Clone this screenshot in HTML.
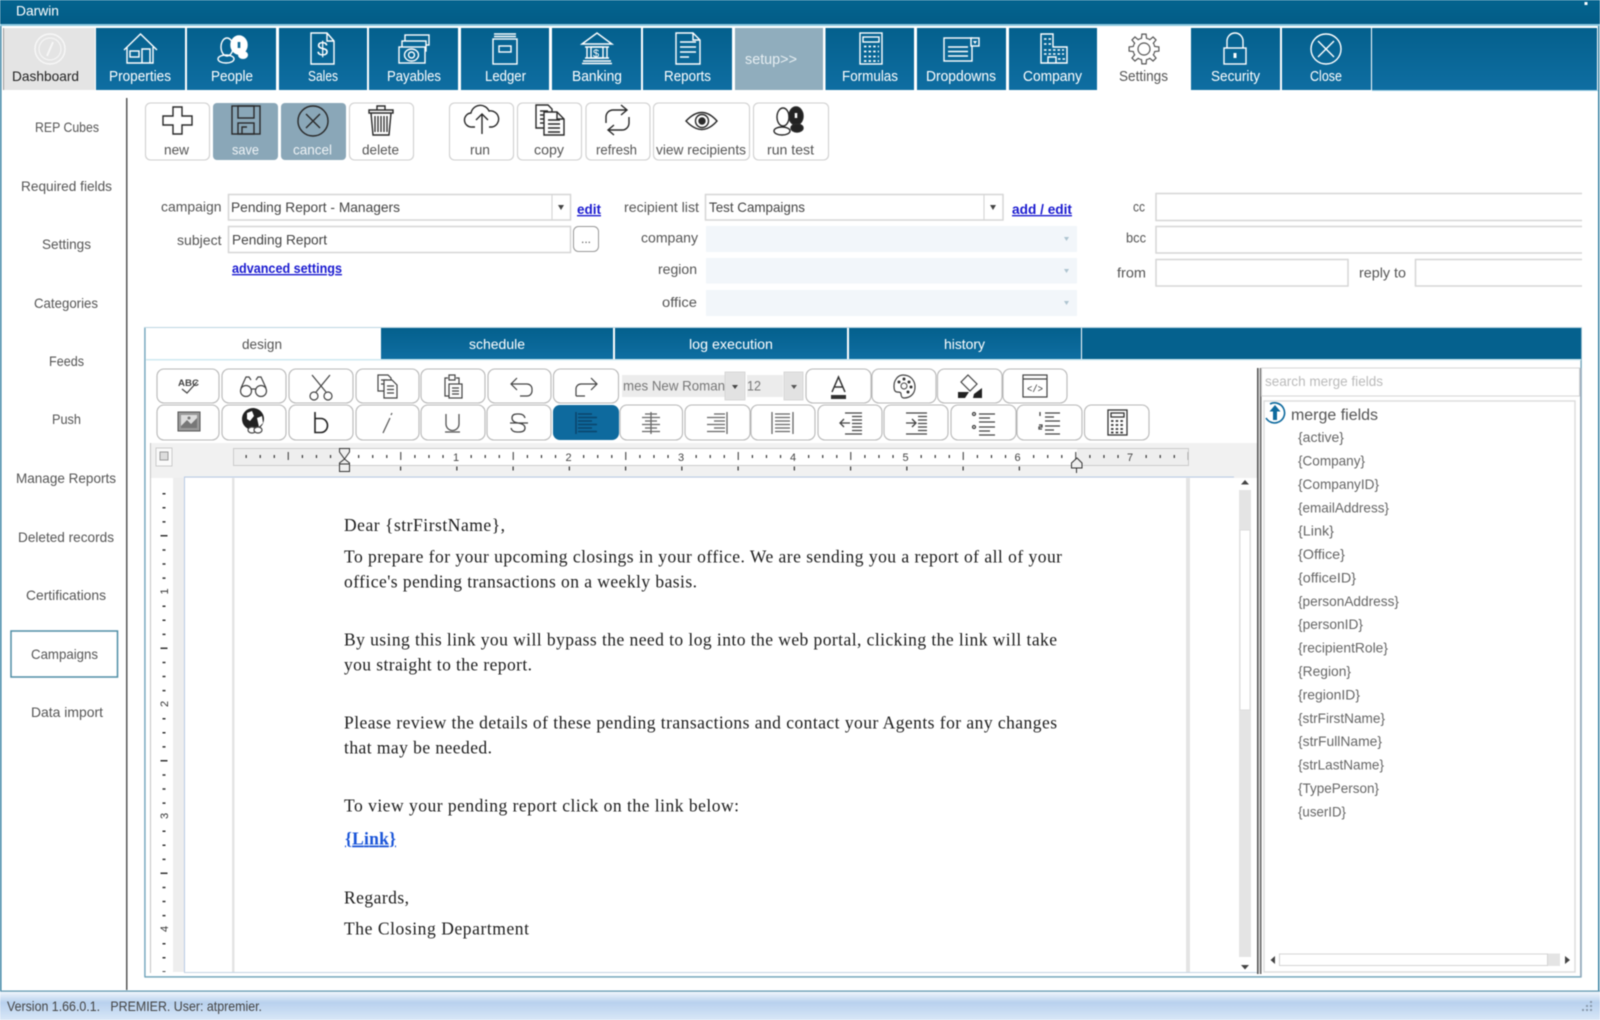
<!DOCTYPE html>
<html><head><meta charset="utf-8"><title>Darwin</title>
<style>
html,body{margin:0;padding:0;background:#fff;width:1600px;height:1020px;overflow:hidden}
svg{display:block;filter:blur(.5px)}
text{font-family:"Liberation Sans",sans-serif;font-size:14px;fill:#555;white-space:pre}
.nv{fill:#fff;font-size:14.5px}
.tb{fill:#555;font-size:14px}
.dk{fill:#444}
.lk{fill:#1a1ad0;font-weight:bold;font-size:13.5px;text-decoration:underline}
.bd{font-family:"Liberation Serif",serif;font-size:17.5px;fill:#1c1c1c}
.mf{fill:#666;font-size:14px}
.ni{fill:none;stroke:#fff;stroke-width:1.4}
.ti{fill:none;stroke:#2a2a2a;stroke-width:1.4}
.ei{fill:none;stroke:#444;stroke-width:1.2}
.btn{fill:#fff;stroke:#b8b8b8;stroke-width:1.1}
.tbb{fill:#fff;stroke:#cfcfcf;stroke-width:1.1}
.in{fill:#fff;stroke:#d6d6d6;stroke-width:1.5}
.dis{fill:#f2f6fa}
</style></head><body>
<svg xmlns="http://www.w3.org/2000/svg" width="1600" height="1020" viewBox="0 0 1600 1020">
<defs>
<linearGradient id="tab" x1="0" y1="0" x2="0" y2="1"><stop offset="0" stop-color="#04608d"/><stop offset="1" stop-color="#0f6ea2"/></linearGradient>
<linearGradient id="ttl" x1="0" y1="0" x2="0" y2="1"><stop offset="0" stop-color="#04648f"/><stop offset="1" stop-color="#035c87"/></linearGradient>
<linearGradient id="st" x1="0" y1="0" x2="0" y2="1"><stop offset="0" stop-color="#f4f8fd"/><stop offset=".4" stop-color="#b8d1ee"/><stop offset="1" stop-color="#d9e7f7"/></linearGradient>
<path id="t" d="M-4.2 -10.2L-2.5 -10.7L-2.1 -14.9H2.1L2.5 -10.7L4.2 -10.2"/>
</defs>
<rect width="1600" height="1020" fill="#fff"/>
<!-- title -->
<rect width="1600" height="24" fill="url(#ttl)"/>
<rect y="24" width="1600" height="2" fill="#8fcae0"/>
<text x="16" y="15.5" fill="#fff" style="fill:#fff" textLength="43" lengthAdjust="spacingAndGlyphs">Darwin</text>
<rect x="1584.5" y="2" width="3" height="3" fill="#fff"/>
<!-- frame -->
<rect x="0" y="26" width="1.5" height="965" fill="#3b84a4"/><rect x="1598" y="26" width="1.5" height="965" fill="#3b84a4"/>
<!-- nav tabs -->
<rect x="3" y="28" width="1.5" height="62" fill="#999"/>
<rect x="4" y="28" width="91" height="62" fill="#e4e4e4"/>
<g fill="url(#tab)">
<rect x="96" y="28" width="89" height="62"/><rect x="187" y="28" width="89" height="62"/><rect x="279" y="28" width="88" height="62"/><rect x="369" y="28" width="89" height="62"/><rect x="461" y="28" width="88" height="62"/><rect x="552" y="28" width="89" height="62"/><rect x="643" y="28" width="89" height="62"/>
<rect x="825.5" y="28" width="88.5" height="62"/><rect x="917" y="28" width="89" height="62"/><rect x="1009" y="28" width="88" height="62"/><rect x="1191" y="28" width="89" height="62"/><rect x="1282" y="28" width="89" height="62"/><rect x="1372" y="28" width="225" height="62"/>
</g>
<rect x="735" y="28" width="88" height="62" fill="#90adbd"/>
<rect x="1372" y="90" width="226" height="1" fill="#9fd0e4"/>
<text x="12" y="81" style="fill:#222" font-size="14.5" textLength="67" lengthAdjust="spacingAndGlyphs">Dashboard</text>
<text class="nv" x="109" y="81" textLength="62" lengthAdjust="spacingAndGlyphs">Properties</text>
<text class="nv" x="211" y="81" textLength="42" lengthAdjust="spacingAndGlyphs">People</text>
<text class="nv" x="308" y="81" textLength="30" lengthAdjust="spacingAndGlyphs">Sales</text>
<text class="nv" x="387" y="81" textLength="54" lengthAdjust="spacingAndGlyphs">Payables</text>
<text class="nv" x="485" y="81" textLength="41" lengthAdjust="spacingAndGlyphs">Ledger</text>
<text class="nv" x="572" y="81" textLength="50" lengthAdjust="spacingAndGlyphs">Banking</text>
<text class="nv" x="664" y="81" textLength="47" lengthAdjust="spacingAndGlyphs">Reports</text>
<text class="nv" x="745" y="64" textLength="52" lengthAdjust="spacingAndGlyphs" style="fill:#e6eef2">setup&gt;&gt;</text>
<text class="nv" x="842" y="81" textLength="56" lengthAdjust="spacingAndGlyphs">Formulas</text>
<text class="nv" x="926" y="81" textLength="70" lengthAdjust="spacingAndGlyphs">Dropdowns</text>
<text class="nv" x="1023" y="81" textLength="59" lengthAdjust="spacingAndGlyphs">Company</text>
<text class="nv" x="1119" y="81" textLength="49" lengthAdjust="spacingAndGlyphs" style="fill:#555">Settings</text>
<text class="nv" x="1211" y="81" textLength="49" lengthAdjust="spacingAndGlyphs">Security</text>
<text class="nv" x="1310" y="81" textLength="32" lengthAdjust="spacingAndGlyphs">Close</text>
<!-- nav icons -->
<g fill="none" stroke="#f8f8f8" stroke-width="1.4"><circle cx="50" cy="49" r="15"/><circle cx="50" cy="49" r="11" stroke-width="1"/><path d="M47 56L53 42" stroke-width="1.800"/></g>
<g class="ni"><path d="M124 50L140.500 34L157 50M127 47V63H153V47"/><rect x="130" y="51" width="9" height="6"/><path d="M142 63V49H150V63"/></g>
<g class="ni"><ellipse cx="227" cy="47" rx="6" ry="9"/><ellipse cx="226" cy="59" rx="8" ry="4"/><ellipse cx="239" cy="45" rx="8" ry="9" fill="#fff"/><path d="M239 42v6" stroke="#0a6797" stroke-width="2.600"/><ellipse cx="243" cy="55" rx="5" ry="4" fill="#fff" stroke="none"/></g>
<g class="ni"><path d="M311 33H327L334 41V64H311ZM327 33V41H334"/></g>
<text x="317" y="56" style="fill:#fff;font-size:20px">$</text>
<g class="ni"><rect x="405" y="35" width="24" height="10"/><rect x="402" y="41" width="24" height="10" fill="#0a6797"/><rect x="399" y="47" width="26" height="16" fill="#0a6797"/><ellipse cx="411.500" cy="55" rx="7" ry="6"/><ellipse cx="411.500" cy="55" rx="3" ry="3"/></g>
<g class="ni"><rect x="493" y="39" width="24" height="25"/><path d="M494 34H516M494 36.500H516" /><rect x="499" y="46" width="12" height="6"/></g>
<g class="ni"><path d="M582 44L597 33L612 44Z"/><path d="M585 47H609M585 58H609M583 61H611M582 63.500H612M587 47V58M607 47V58"/><rect x="591" y="47" width="12" height="11"/></g>
<text x="593" y="57" style="fill:#fff;font-size:11px">$</text>
<g class="ni"><path d="M676 33H693L700 40V64H676ZM693 33V40H700M680 42H696M680 47H696M680 52H696M680 57H689"/></g>
<g class="ni"><rect x="860" y="33" width="22" height="31"/><rect x="863" y="37" width="16" height="5"/></g>
<g fill="none" stroke="#fff" stroke-width="1.800" stroke-dasharray="2.400 2.200"><path d="M864 46.500H879M864 51.500H879M864 56.500H879M864 61H879"/></g>
<g class="ni"><rect x="944" y="38" width="28" height="23"/><rect x="971" y="38" width="8" height="8" fill="#0a6797"/><path d="M973 41H977L975 44Z" fill="#fff" stroke="none"/><path d="M948 47H968M948 51.500H968M948 56H968"/></g>
<g class="ni"><path d="M1041 34H1053V47H1067V63H1041Z"/><path d="M1048 63V57H1056V63" /></g>
<g fill="none" stroke="#fff" stroke-width="1.500" stroke-dasharray="2.500 2"><path d="M1044 39H1051M1044 44H1051M1044 50H1064M1044 54H1064M1058 59H1065"/></g>
<g transform="translate(1144 49)" fill="none" stroke="#555" stroke-width="1.200"><circle r="6"/><use href="#t"/><use href="#t" transform="rotate(45)"/><use href="#t" transform="rotate(90)"/><use href="#t" transform="rotate(135)"/><use href="#t" transform="rotate(180)"/><use href="#t" transform="rotate(225)"/><use href="#t" transform="rotate(270)"/><use href="#t" transform="rotate(315)"/></g>
<g class="ni"><path d="M1227 48V41a8 8 0 0 1 16 0V48"/><rect x="1224" y="48" width="22" height="16"/></g><rect x="1233.500" y="53" width="3" height="5" fill="#fff"/>
<g class="ni"><circle cx="1326" cy="49" r="15"/><path d="M1318 41L1334 57M1334 41L1318 57"/></g>
<!-- side divider -->
<rect x="126" y="98" width="1.500" height="892" fill="#555"/>
<!-- sidebar -->
<g>
<text x="35" y="132" textLength="64" lengthAdjust="spacingAndGlyphs">REP Cubes</text>
<text x="21" y="191" textLength="91" lengthAdjust="spacingAndGlyphs">Required fields</text>
<text x="42" y="249" textLength="49" lengthAdjust="spacingAndGlyphs">Settings</text>
<text x="34" y="308" textLength="64" lengthAdjust="spacingAndGlyphs">Categories</text>
<text x="49" y="366" textLength="35" lengthAdjust="spacingAndGlyphs">Feeds</text>
<text x="52" y="424" textLength="29" lengthAdjust="spacingAndGlyphs">Push</text>
<text x="16" y="483" textLength="100" lengthAdjust="spacingAndGlyphs">Manage Reports</text>
<text x="18" y="542" textLength="96" lengthAdjust="spacingAndGlyphs">Deleted records</text>
<text x="26" y="600" textLength="80" lengthAdjust="spacingAndGlyphs">Certifications</text>
<rect x="11" y="631" width="106.500" height="46" fill="#fff" stroke="#4f8ea6" stroke-width="1.500"/>
<text x="31" y="659" textLength="67" lengthAdjust="spacingAndGlyphs">Campaigns</text>
<text x="31" y="717" textLength="72" lengthAdjust="spacingAndGlyphs">Data import</text>
</g>
<!-- toolbar buttons -->
<rect class="tbb" x="145.500" y="103" width="64" height="57" rx="5"/>
<rect x="213" y="103" width="65" height="57" rx="4" fill="#8aa7b8"/>
<rect x="281" y="103" width="65" height="57" rx="4" fill="#8aa7b8"/>
<rect class="tbb" x="349.500" y="103" width="64" height="57" rx="5"/>
<rect class="tbb" x="449.500" y="103" width="64" height="57" rx="5"/>
<rect class="tbb" x="517.500" y="103" width="64" height="57" rx="5"/>
<rect class="tbb" x="586" y="103" width="64" height="57" rx="5"/>
<rect class="tbb" x="653.500" y="103" width="96" height="57" rx="5"/>
<rect class="tbb" x="753.500" y="103" width="75" height="57" rx="5"/>
<text class="tb" x="164" y="154.500" textLength="25" lengthAdjust="spacingAndGlyphs">new</text>
<text class="tb" x="232" y="154.500" textLength="27" lengthAdjust="spacingAndGlyphs" style="fill:#eef3f6">save</text>
<text class="tb" x="293" y="154.500" textLength="39" lengthAdjust="spacingAndGlyphs" style="fill:#eef3f6">cancel</text>
<text class="tb" x="362" y="154.500" textLength="37" lengthAdjust="spacingAndGlyphs">delete</text>
<text class="tb" x="470" y="154.500" textLength="20" lengthAdjust="spacingAndGlyphs">run</text>
<text class="tb" x="534" y="154.500" textLength="30" lengthAdjust="spacingAndGlyphs">copy</text>
<text class="tb" x="596" y="154.500" textLength="41" lengthAdjust="spacingAndGlyphs">refresh</text>
<text class="tb" x="656" y="154.500" textLength="90" lengthAdjust="spacingAndGlyphs">view recipients</text>
<text class="tb" x="767" y="154.500" textLength="47" lengthAdjust="spacingAndGlyphs">run test</text>
<!-- toolbar icons -->
<path class="ti" d="M173 107h9v9h10v9h-10v9h-9v-9h-10v-9h10z"/>
<g class="ti"><rect x="232" y="106" width="28" height="28"/><rect x="238" y="106" width="16" height="12"/><rect x="238" y="123" width="16" height="11"/><path d="M242 134V127H247"/></g>
<g class="ti"><circle cx="313" cy="121" r="15"/><path d="M306 114L320 128M320 114L306 128"/></g>
<g class="ti"><path d="M377 110V106H385V110M369 110H393V113H369ZM371 113L373 135H389L391 113"/><path d="M375 116V132M378 116V132M381 116V132M384 116V132M387 116V132" stroke-width="1.300"/></g>
<g class="ti"><path d="M475 127H472a7 7 0 0 1-1-14a9.500 9.500 0 0 1 18-2a8 8 0 0 1 3 16H489M482 134V114M476 120L482 114L488 120"/></g>
<g class="ti" stroke-width="1.300"><path d="M536 105H548L552 109V128H536ZM540 111H548M540 115H548M540 119H548M540 123H548"/><path d="M544 112H557L564 119V135H544Z" fill="#fff"/><path d="M557 112V119H564M548 120H560M548 124H560M548 128H560M548 132H560"/></g>
<g class="ti" stroke-width="1.300"><path d="M606 123V117a7 7 0 0 1 7-7H626M621 105L627 110L621 115M629 117V123a7 7 0 0 1-7 7H609M614 125L608 130L614 135"/></g>
<g class="ti"><path d="M686 121Q702 104 717 121Q702 138 686 121Z"/><circle cx="702" cy="121" r="6.500"/><circle cx="702" cy="121" r="3" fill="#2a2a2a"/></g>
<g class="ti"><ellipse cx="783" cy="117" rx="6" ry="9"/><ellipse cx="782" cy="131" rx="8" ry="4"/><ellipse cx="796" cy="116" rx="7" ry="9" fill="#222"/><path d="M796 113v5" stroke="#fff" stroke-width="2.500"/><ellipse cx="797" cy="128" rx="6" ry="4" fill="#222"/></g>
<!-- form -->
<text x="161" y="211.500" textLength="60.500" lengthAdjust="spacingAndGlyphs">campaign</text>
<rect class="in" x="228.500" y="194.500" width="342" height="25.500"/>
<path d="M552 195V220" stroke="#d2d2d2" stroke-width="1"/><path d="M558 205H564L561 210Z" fill="#444"/>
<text x="231" y="212" textLength="169" lengthAdjust="spacingAndGlyphs" style="fill:#444">Pending Report - Managers</text>
<text class="lk" x="577" y="214" textLength="24" lengthAdjust="spacingAndGlyphs">edit</text>
<text x="177" y="245" textLength="44.500" lengthAdjust="spacingAndGlyphs">subject</text>
<rect class="in" x="228.500" y="226.500" width="342" height="26"/>
<text x="232" y="244.500" textLength="95" lengthAdjust="spacingAndGlyphs" style="fill:#444">Pending Report</text>
<rect x="573.500" y="226.500" width="25" height="25" rx="5" fill="#fff" stroke="#999"/>
<text x="581" y="243" style="font-size:12px">...</text>
<text class="lk" x="232" y="273" textLength="110" lengthAdjust="spacingAndGlyphs">advanced settings</text>
<text x="624" y="212" textLength="75" lengthAdjust="spacingAndGlyphs">recipient list</text>
<rect class="in" x="705.500" y="194.500" width="297.500" height="25.500"/>
<path d="M984 195V220" stroke="#d2d2d2" stroke-width="1"/><path d="M990 205H996L993 210Z" fill="#444"/>
<text x="709" y="212" textLength="96" lengthAdjust="spacingAndGlyphs" style="fill:#444">Test Campaigns</text>
<text class="lk" x="1012" y="214" textLength="60" lengthAdjust="spacingAndGlyphs">add / edit</text>
<text x="641" y="242.500" textLength="57" lengthAdjust="spacingAndGlyphs">company</text>
<text x="658" y="274" textLength="39" lengthAdjust="spacingAndGlyphs">region</text>
<text x="662" y="307" textLength="35" lengthAdjust="spacingAndGlyphs">office</text>
<rect class="dis" x="706" y="226" width="371" height="26"/><rect class="dis" x="706" y="258" width="371" height="25.500"/><rect class="dis" x="706" y="290" width="371" height="26"/>
<g fill="#aec4d0"><path d="M1064 237H1069L1066.500 241Z"/><path d="M1064 269H1069L1066.500 273Z"/><path d="M1064 301H1069L1066.500 305Z"/></g>
<text x="1133" y="211.500" textLength="12" lengthAdjust="spacingAndGlyphs">cc</text>
<text x="1126" y="242.500" textLength="20" lengthAdjust="spacingAndGlyphs">bcc</text>
<text x="1117" y="277.500" textLength="29" lengthAdjust="spacingAndGlyphs">from</text>
<text x="1359" y="277.500" textLength="47" lengthAdjust="spacingAndGlyphs">reply to</text>
<path class="in" d="M1582 193.500H1156V220.500H1582M1582 226.500H1156V253H1582" style="fill:#fff"/>
<rect class="in" x="1156" y="259.500" width="192" height="26.500"/>
<path class="in" d="M1582 259.500H1415.500V286H1582"/>
<!-- panel + tabs -->
<rect x="144.500" y="327.500" width="1437" height="649" fill="#fff" stroke="#bcd6e2" stroke-width="1"/>
<path d="M145 328V977H1581V328" fill="none" stroke="#6fa3b9" stroke-width="1.200"/>
<rect x="381" y="328" width="232" height="31" fill="url(#tab)"/><rect x="615" y="328" width="232" height="31" fill="url(#tab)"/><rect x="849" y="328" width="232" height="31" fill="url(#tab)"/><rect x="1082" y="328" width="499" height="31" fill="#05618e"/>
<text x="242" y="349" textLength="40" lengthAdjust="spacingAndGlyphs">design</text>
<text x="469" y="349" textLength="56" lengthAdjust="spacingAndGlyphs" style="fill:#fff">schedule</text>
<text x="689" y="349" textLength="84" lengthAdjust="spacingAndGlyphs" style="fill:#fff">log execution</text>
<text x="944" y="349" textLength="41" lengthAdjust="spacingAndGlyphs" style="fill:#fff">history</text>
<rect x="146" y="359" width="1435" height="1.500" fill="#cfeaf2"/>
<!-- editor toolbar row 1 -->
<g>
<rect class="btn" x="157" y="369" width="62" height="34" rx="7"/><rect class="btn" x="222" y="369" width="64" height="34" rx="7"/><rect class="btn" x="289" y="369" width="64" height="34" rx="7"/><rect class="btn" x="356" y="369" width="63" height="34" rx="7"/><rect class="btn" x="421" y="369" width="64" height="34" rx="7"/><rect class="btn" x="488" y="369" width="63" height="34" rx="7"/><rect class="btn" x="553.500" y="369" width="65" height="34" rx="7"/>
<rect class="btn" x="806" y="369" width="65" height="34" rx="7"/><rect class="btn" x="872" y="369" width="64" height="34" rx="7"/><rect class="btn" x="937.500" y="369" width="64.500" height="34" rx="7"/><rect class="btn" x="1003" y="369" width="64" height="34" rx="7"/>
<rect class="btn" x="157" y="405" width="62" height="35" rx="7"/><rect class="btn" x="222" y="405" width="64" height="35" rx="7"/><rect class="btn" x="289" y="405" width="64" height="35" rx="7"/><rect class="btn" x="356" y="405" width="63" height="35" rx="7"/><rect class="btn" x="421" y="405" width="64" height="35" rx="7"/><rect class="btn" x="487" y="405" width="64" height="35" rx="7"/>
<rect x="553" y="405" width="66" height="35" rx="7" fill="#0e6a9e"/>
<rect class="btn" x="620" y="405" width="62.500" height="35" rx="7"/><rect class="btn" x="685" y="405" width="65" height="35" rx="7"/><rect class="btn" x="751" y="405" width="64" height="35" rx="7"/><rect class="btn" x="818" y="405" width="64" height="35" rx="7"/><rect class="btn" x="884" y="405" width="64" height="35" rx="7"/><rect class="btn" x="951" y="405" width="65" height="35" rx="7"/><rect class="btn" x="1017" y="405" width="65" height="35" rx="7"/><rect class="btn" x="1084.500" y="405" width="64.500" height="35" rx="7"/>
</g>
<rect x="622" y="375" width="103" height="22" fill="#ececec"/><rect x="725" y="372" width="20" height="28" fill="#e2e2e2" stroke="#d2d2d2" stroke-width=".8"/>
<rect x="747" y="375" width="36" height="22" fill="#ececec"/><rect x="784" y="372" width="19" height="28" fill="#e2e2e2" stroke="#d2d2d2" stroke-width=".8"/>
<text x="623" y="390.500" textLength="102" lengthAdjust="spacingAndGlyphs" style="fill:#777">mes New Roman</text>
<text x="747" y="390.500" textLength="14" lengthAdjust="spacingAndGlyphs" style="fill:#777">12</text>
<path d="M732 385H738L735 389Z" fill="#444"/><path d="M791 385H797L794 389Z" fill="#555"/>
<!-- row1 icons -->
<text x="178" y="386" textLength="21" lengthAdjust="spacingAndGlyphs" style="font-size:9.500px;font-weight:bold;fill:#444">ABC</text>
<path class="ei" d="M182 389L187 393L197 382" />
<g class="ei"><circle cx="246" cy="391" r="5.500"/><circle cx="261" cy="391" r="5.500"/><path d="M241 388L246 377H249L251 380M266 388L261 377H258L256 380M251 389H256"/></g>
<g class="ei"><circle cx="314" cy="396" r="4"/><circle cx="328" cy="396" r="4"/><path d="M316 392L330 375M326 392L312 375"/></g>
<g class="ei"><path d="M378 375H388L391 378V391H378ZM381 380H387M381 384H387"/><path d="M384 380H392L397 385V398H384Z" fill="#fff"/><path d="M387 386H394M387 389.500H394M387 393H394"/></g>
<g class="ei"><path d="M448 378H445V396H449M456 378H459V384M449 375H455V380H449Z"/><rect x="449" y="384" width="13" height="14" fill="#fff"/><path d="M452 388H459M452 391H459M452 394H459"/></g>
<path class="ei" d="M511 384H527a5 5 0 0 1 5 5V391a5 5 0 0 1-5 5H520M517 378L511 384L517 390"/>
<path class="ei" d="M597 384H581a5 5 0 0 0-5 5V396M591 378L597 384L591 390M576 396H585"/>
<path d="M832 392L838.500 377L845 392M834.500 387H842.500" fill="none" stroke="#333" stroke-width="1.500"/><rect x="831" y="395" width="15" height="4" fill="#333"/>
<g class="ei"><path d="M903 375C910 375 915 380 915 387C915 394 910 398 904 398C902 398 901 396 901 394C901 392 899 392 897 392C895 392 894 390 894 386C894 380 898 375 903 375Z"/></g>
<g fill="#333"><circle cx="899" cy="382" r="1.500"/><circle cx="904" cy="379" r="1.500"/><circle cx="909" cy="382" r="1.500"/><circle cx="911" cy="387" r="1.500"/><circle cx="908" cy="392" r="1.500"/></g><circle cx="904" cy="386" r="3" fill="none" stroke="#444"/>
<path class="ei" d="M968 375L977 384L970 391L961 382Z"/><path d="M958 392H969L965 398H958Z" fill="#222"/><path d="M974 394L982 388V398H973Z" fill="#222"/>
<g class="ei"><rect x="1023" y="375" width="24" height="22"/><path d="M1023 379H1047"/></g><text x="1027" y="392" textLength="16" lengthAdjust="spacingAndGlyphs" style="font-size:10.500px;fill:#333;font-family:'Liberation Mono',monospace">&lt;/&gt;</text>
<!-- row2 icons -->
<rect x="178" y="412" width="22" height="19" fill="#999" stroke="#555"/><rect x="181" y="415" width="16" height="13" fill="#ddd"/><path d="M181 426L187 420L191 424L197 418V428H181Z" fill="#777"/><circle cx="189" cy="418" r="1.500" fill="#777"/>
<circle cx="253" cy="419" r="11" fill="#222"/><path d="M247 413L252 411L254 416L250 421L247 419ZM257 418L262 416L263 423L259 427Z" fill="#fff"/>
<g class="ei"><ellipse cx="252" cy="430" rx="4" ry="3" fill="#fff"/><ellipse cx="258" cy="430" rx="4" ry="3" fill="#fff"/></g>
<path d="M315 412V432.500H321a6.500 7 0 0 0 0-14H315" fill="none" stroke="#222" stroke-width="1.600"/>
<path d="M383 433L390 418M391 415L392 413" fill="none" stroke="#555" stroke-width="1.200"/>
<path d="M446 414V424a6.500 6.500 0 0 0 13 0V414M445 432H460" fill="none" stroke="#555" stroke-width="1.300"/>
<path d="M525 418Q524 414 519 414H517Q512 414 512 418Q512 422 518 423Q525 424 525 428Q525 432 519 432H517Q512 432 511 428M510 423H528" fill="none" stroke="#444" stroke-width="1.300"/>
<path d="M576 412V434M578 414H592M578 417.500H597M578 421H592M578 424.500H597M578 428H592M578 431.500H597" fill="none" stroke="#0a456b" stroke-width="1.500"/>
<path d="M651 412V434M645 414H657M642 417.500H660M645 421H657M642 424.500H660M645 428H657M642 431.500H660" fill="none" stroke="#666" stroke-width="1.300"/>
<path d="M727 412V434M714 414H725M707 417.500H725M714 421H725M707 424.500H725M714 428H725M707 431.500H725" fill="none" stroke="#666" stroke-width="1.300"/>
<path d="M772 412V434M793 412V434M775 414H790M775 417.500H790M775 421H790M775 424.500H790M775 428H790M775 431.500H790" fill="none" stroke="#666" stroke-width="1.300"/>
<path d="M840 423H850M844 419L840 423L844 427M845 413H862M852 416.500H862M852 420H862M852 423.500H862M852 427H862M852 430.500H862M845 434H862" fill="none" stroke="#444" stroke-width="1.300"/>
<path d="M906 423H916M912 419L916 423L912 427M906 413H927M918 416.500H927M918 420H927M918 423.500H927M918 427H927M918 430.500H927M906 434H927" fill="none" stroke="#444" stroke-width="1.300"/>
<g fill="none" stroke="#444" stroke-width="1.300"><circle cx="974" cy="414" r="1.500"/><circle cx="974" cy="427" r="1.500"/><path d="M979 414H995M979 418H990M979 422H995M979 427H995M979 431H990M979 435H995"/></g>
<g fill="none" stroke="#444" stroke-width="1.300"><path d="M1040 412V416M1039 425H1042V427H1039V429H1042M1045 413H1060M1045 417H1054M1045 421H1060M1045 426H1060M1045 430H1054M1045 434H1060"/></g>
<g fill="none" stroke="#333" stroke-width="1.300"><rect x="1108" y="410" width="19" height="25"/><rect x="1111" y="413" width="13" height="4"/></g>
<path d="M1111 421H1124M1111 425H1124M1111 429H1124M1111 432.500H1124" fill="none" stroke="#333" stroke-width="1.800" stroke-dasharray="2.500 2.200"/>
<!-- ruler -->
<rect x="150" y="443" width="1107" height="35" fill="#f1f1f1"/>
<rect x="156" y="448" width="16" height="18" fill="#fafafa" stroke="#ccc"/><rect x="160" y="452" width="8" height="8" fill="#ddd" stroke="#999"/>
<rect x="233.500" y="448.500" width="955" height="17" fill="#fff" stroke="#ccc"/>
<rect x="234" y="449" width="110" height="16" fill="#eee"/><rect x="1077" y="449" width="111" height="16" fill="#eee"/>
<line x1="245.560" y1="456.500" x2="1188" y2="456.500" stroke="#333" stroke-width="3" stroke-dasharray="1.200 12.862 1.200 12.862 1.200 26.926"/>
<line x1="287.750" y1="456" x2="1188" y2="456" stroke="#333" stroke-width="8" stroke-dasharray="1 111.500"/>
<line x1="400" y1="468.500" x2="1072" y2="468.500" stroke="#333" stroke-width="4" stroke-dasharray="1.200 55.050"/>
<g style="fill:#444"><text x="453" y="461" style="font-size:11px;fill:#444">1</text><text x="565.500" y="461" style="font-size:11px;fill:#444">2</text><text x="678" y="461" style="font-size:11px;fill:#444">3</text><text x="790" y="461" style="font-size:11px;fill:#444">4</text><text x="902.500" y="461" style="font-size:11px;fill:#444">5</text><text x="1014.500" y="461" style="font-size:11px;fill:#444">6</text><text x="1127" y="461" style="font-size:11px;fill:#444">7</text></g>
<path d="M339.500 448.500H349.500V452L344.500 459L339.500 452ZM344.500 459L349.500 463V471.500H339.500V463Z" fill="#eee" stroke="#333"/><path d="M339.500 464H349.500" stroke="#333"/>
<path d="M1077 458L1082 463V468H1071.500V463Z" fill="#eee" stroke="#333"/><path d="M1076.500 468V473" stroke="#333"/>
<!-- editor area -->
<rect x="150" y="478" width="23" height="494" fill="#fff"/><rect x="173" y="478" width="11" height="494" fill="#eee"/>
<rect x="150" y="443" width="1" height="530" fill="#c4c4c4"/>
<rect x="184" y="476.500" width="1050" height="1" fill="#b9cbe5"/><rect x="184" y="477" width="1" height="496" fill="#b9cbe5"/>
<rect x="232" y="478" width="2.500" height="494" fill="#e4e4e4"/><rect x="1186" y="478" width="4" height="494" fill="#e4e4e4"/>
<rect x="184" y="972" width="1073" height="1" fill="#c4d4e4"/>
<line x1="164" y1="493" x2="164" y2="972" stroke="#333" stroke-width="3" stroke-dasharray="1.500 12.562 1.500 12.562 1.500 26.625"/>
<line x1="164" y1="535" x2="164" y2="972" stroke="#333" stroke-width="7" stroke-dasharray="1.500 111"/>
<g><text transform="translate(168 594.500) rotate(-90)" style="font-size:11px;fill:#333">1</text><text transform="translate(168 707) rotate(-90)" style="font-size:11px;fill:#333">2</text><text transform="translate(168 819) rotate(-90)" style="font-size:11px;fill:#333">3</text><text transform="translate(168 932) rotate(-90)" style="font-size:11px;fill:#333">4</text></g>
<!-- scrollbar -->
<rect x="1239" y="490" width="12" height="467" fill="#e4e4e4"/><rect x="1240" y="530" width="10" height="180" fill="#fff" stroke="#ddd"/>
<path d="M1241 484.500L1245 480L1249 484.500Z" fill="#444"/><path d="M1241 965L1245 969.500L1249 965Z" fill="#444"/>
<!-- body text -->
<text class="bd" x="344" y="531" textLength="161" lengthAdjust="spacing">Dear {strFirstName},</text>
<text class="bd" x="344" y="562.500" textLength="718" lengthAdjust="spacing">To prepare for your upcoming closings in your office. We are sending you a report of all of your</text>
<text class="bd" x="344" y="587.500" textLength="353" lengthAdjust="spacing">office's pending transactions on a weekly basis.</text>
<text class="bd" x="344" y="645.500" textLength="713" lengthAdjust="spacing">By using this link you will bypass the need to log into the web portal, clicking the link will take</text>
<text class="bd" x="344" y="670.500" textLength="188" lengthAdjust="spacing">you straight to the report.</text>
<text class="bd" x="344" y="728.500" textLength="713" lengthAdjust="spacing">Please review the details of these pending transactions and contact your Agents for any changes</text>
<text class="bd" x="344" y="753.500" textLength="148" lengthAdjust="spacing">that may be needed.</text>
<text class="bd" x="344" y="811.500" textLength="395" lengthAdjust="spacing">To view your pending report click on the link below:</text>
<text class="bd" x="345" y="844.500" textLength="51" lengthAdjust="spacing" style="fill:#1a55d8;font-weight:bold;text-decoration:underline">{Link}</text>
<text class="bd" x="344" y="903.500" textLength="65" lengthAdjust="spacing">Regards,</text>
<text class="bd" x="344" y="934.500" textLength="185" lengthAdjust="spacing">The Closing Department</text>
<!-- merge panel -->
<rect x="1257" y="368" width="1.500" height="606" fill="#555"/><rect x="1258.500" y="368" width="1.500" height="606" fill="#ddd"/><rect x="1260" y="368" width="1.500" height="606" fill="#666"/>
<rect x="1261.500" y="368" width="318" height="28" fill="#fff" stroke="#d4d4d4"/>
<text x="1265" y="386" textLength="118" lengthAdjust="spacingAndGlyphs" style="fill:#bbb">search merge fields</text>
<rect x="1264" y="401" width="311" height="571" fill="#fff" stroke="#ddd" stroke-width="1.500"/>
<rect x="1580" y="368" width="1.500" height="609" fill="#9ab"/>
<path d="M1270 404A10 10 0 1 1 1266 418" fill="none" stroke="#0e6a9e" stroke-width="1.600"/>
<path d="M1275 405L1269.500 411.500H1273V420H1277V411.500H1280.500Z" fill="#0e6a9e"/>
<text x="1291" y="420" textLength="87" lengthAdjust="spacingAndGlyphs" style="font-size:15.500px;fill:#555">merge fields</text>
<text class="mf" x="1298" y="442" textLength="46" lengthAdjust="spacingAndGlyphs">{active}</text>
<text class="mf" x="1298" y="465.500" textLength="67" lengthAdjust="spacingAndGlyphs">{Company}</text>
<text class="mf" x="1298" y="489" textLength="81" lengthAdjust="spacingAndGlyphs">{CompanyID}</text>
<text class="mf" x="1298" y="512.300" textLength="91" lengthAdjust="spacingAndGlyphs">{emailAddress}</text>
<text class="mf" x="1298" y="535.700" textLength="36" lengthAdjust="spacingAndGlyphs">{Link}</text>
<text class="mf" x="1298" y="559" textLength="47" lengthAdjust="spacingAndGlyphs">{Office}</text>
<text class="mf" x="1298" y="582.400" textLength="58" lengthAdjust="spacingAndGlyphs">{officeID}</text>
<text class="mf" x="1298" y="605.800" textLength="101" lengthAdjust="spacingAndGlyphs">{personAddress}</text>
<text class="mf" x="1298" y="629.200" textLength="65" lengthAdjust="spacingAndGlyphs">{personID}</text>
<text class="mf" x="1298" y="652.600" textLength="90" lengthAdjust="spacingAndGlyphs">{recipientRole}</text>
<text class="mf" x="1298" y="676" textLength="53" lengthAdjust="spacingAndGlyphs">{Region}</text>
<text class="mf" x="1298" y="699.400" textLength="62" lengthAdjust="spacingAndGlyphs">{regionID}</text>
<text class="mf" x="1298" y="722.800" textLength="87" lengthAdjust="spacingAndGlyphs">{strFirstName}</text>
<text class="mf" x="1298" y="746.200" textLength="84" lengthAdjust="spacingAndGlyphs">{strFullName}</text>
<text class="mf" x="1298" y="769.600" textLength="86" lengthAdjust="spacingAndGlyphs">{strLastName}</text>
<text class="mf" x="1298" y="793" textLength="81" lengthAdjust="spacingAndGlyphs">{TypePerson}</text>
<text class="mf" x="1298" y="816.400" textLength="48" lengthAdjust="spacingAndGlyphs">{userID}</text>
<rect x="1279" y="953.500" width="281" height="12.500" fill="#e4e4e4"/><rect x="1279.500" y="954" width="268" height="11.500" fill="#fff" stroke="#d4d4d4"/>
<path d="M1275 956V964L1270.500 960Z" fill="#444"/><path d="M1565 956V964L1570 960Z" fill="#444"/>
<!-- status -->
<rect x="0" y="991" width="1600" height="29" fill="url(#st)"/>
<rect x="0" y="990.500" width="1600" height="1.200" fill="#5a93ad"/>
<text x="7" y="1011" textLength="255" lengthAdjust="spacingAndGlyphs" style="fill:#444">Version 1.66.0.1.   PREMIER. User: atpremier.</text>
<g fill="#8a9aac"><rect x="1590" y="1001" width="2" height="2"/><rect x="1586" y="1005" width="2" height="2"/><rect x="1590" y="1005" width="2" height="2"/><rect x="1582" y="1009" width="2" height="2"/><rect x="1586" y="1009" width="2" height="2"/><rect x="1590" y="1009" width="2" height="2"/></g>
</svg>
</body></html>
